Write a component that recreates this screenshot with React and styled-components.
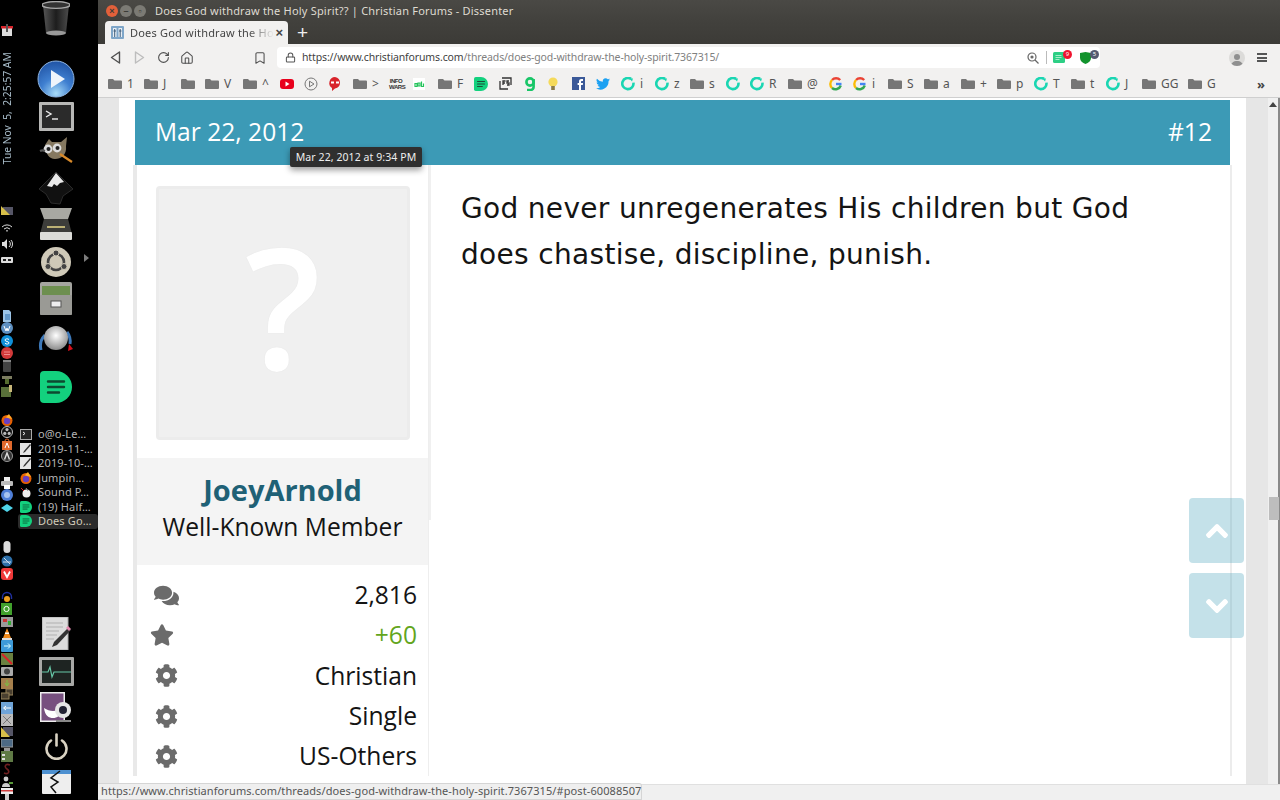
import React from "react"
import styled, { createGlobalStyle } from "styled-components"
import { FaComments, FaStar, FaCog, FaChevronUp, FaChevronDown } from "react-icons/fa"
import { RotateCw, Home, Bookmark, Lock } from "lucide-react"

const GlobalStyle = createGlobalStyle`
  html, body {
    margin: 0;
    height: 100%;
    overflow: hidden;
    background: #000;
  }
  * { box-sizing: border-box; }
`

const Desktop = styled.div`
  display: flex;
  width: 1280px;
  height: 800px;
  overflow: hidden;
`

/* ---------- launcher ---------- */

const Launcher = styled.aside`
  position: relative;
  display: flex;
  width: 98px;
  flex: none;
  height: 800px;
  background: #000;
  overflow: hidden;
`

const Tray = styled.div`
  display: flex;
  flex-direction: column;
  align-items: center;
  width: 14px;
  flex: none;
`

const TrayGroup = styled.div`
  display: flex;
  flex-direction: column;
  align-items: center;
  margin-top: ${(p) => p.$top}px;
`

const TrayItem = styled.div`
  display: flex;
  align-items: center;
  justify-content: center;
  height: ${(p) => p.$h}px;
`

const Clock = styled.div`
  margin-top: 10px;
  height: 119px;
  writing-mode: vertical-rl;
  transform: rotate(180deg);
  font: 10.3px/14px "Noto Sans", sans-serif;
  white-space: pre;
  color: #a8bcc9;
`

const Dock = styled.div`
  display: flex;
  flex-direction: column;
  align-items: center;
  flex: 1;
`

const DockSlot = styled.div`
  position: relative;
  display: flex;
  justify-content: center;
  margin-top: ${(p) => p.$top}px;
  height: ${(p) => p.$h}px;
`

const DockArrow = styled.span`
  position: absolute;
  left: 43px;
  top: 7px;
  width: 0;
  height: 0;
  border-left: 5px solid #7c7c7c;
  border-top: 4px solid transparent;
  border-bottom: 4px solid transparent;
`

const WindowList = styled.div`
  align-self: stretch;
  margin-top: 24px;
  padding-left: 4px;
`

const WindowRow = styled.div`
  display: flex;
  align-items: center;
  gap: 6px;
  height: 14.5px;
  padding-left: 2px;
  border-radius: 3px;
  background: ${(p) => (p.$active ? "#2b2b2b" : "transparent")};
  color: ${(p) => (p.$active ? "#d3cdbb" : "#b5b5b5")};
  font: 11px/14px "Noto Sans", sans-serif;
  letter-spacing: 0.15px;
  white-space: nowrap;
`

/* ---------- browser chrome ---------- */

const Browser = styled.main`
  position: relative;
  display: flex;
  flex-direction: column;
  flex: 1;
  min-width: 0;
  height: 800px;
  background: #f2f1f0;
`

const TitleBar = styled.div`
  display: flex;
  align-items: center;
  height: 21px;
  padding-left: 8px;
  background: linear-gradient(#4a4945, #42413d);
`

const WindowDot = styled.span`
  width: 12px;
  height: 12px;
  margin-right: 2px;
  border-radius: 50%;
  display: flex;
  align-items: center;
  justify-content: center;
  background: ${(p) => (p.$close ? "#e2603a" : "#7b7a74")};
  color: #3c3b37;
  font: bold 9px/12px "Liberation Sans", sans-serif;
`

const WindowTitle = styled.div`
  margin-left: 7px;
  font: 11px/21px "Noto Sans", sans-serif;
  letter-spacing: 0.2px;
  color: #dfdbd2;
`

const TabStrip = styled.div`
  display: flex;
  align-items: flex-end;
  height: 23px;
  padding-left: 7px;
  background: linear-gradient(#42413d, #3c3b37);
`

const Tab = styled.div`
  display: flex;
  align-items: center;
  width: 183px;
  height: 23px;
  padding-left: 6px;
  background: #f2f1f0;
  border-radius: 4px 4px 0 0;
`

const TabText = styled.span`
  flex: none;
  margin-left: 6px;
  white-space: nowrap;
  font: 11px/23px "Noto Sans", sans-serif;
  letter-spacing: 0.2px;
  color: #444;
  mask-image: linear-gradient(90deg, #000 82%, transparent);
`

const TabClose = styled.span`
  margin-left: auto;
  margin-right: 5px;
  font: bold 13px/23px "Liberation Sans", sans-serif;
  color: #444;
`

const NewTab = styled.span`
  margin-left: 9px;
  font: 19px/23px "Liberation Sans", sans-serif;
  color: #eee;
`

const Toolbar = styled.div`
  display: flex;
  align-items: center;
  height: 25px;
  margin-top: 1px;
  padding-left: 5px;
  color: #555;
`

const NavButton = styled.span`
  display: flex;
  justify-content: center;
  width: 24px;
  color: ${(p) => (p.$off ? "#bdbdbd" : "#505050")};
`

const SaveButton = styled(NavButton)`
  margin-left: 49px;
`

const Address = styled.div`
  position: relative;
  display: flex;
  align-items: center;
  width: 823px;
  height: 21px;
  margin-left: 5px;
  padding-left: 8px;
  background: #fff;
  border-radius: 4px;
`

const Url = styled.div`
  margin-left: 6px;
  font: 10.5px/21px "Noto Sans", sans-serif;
  letter-spacing: -0.13px;
  color: #3f3f3f;
  span { color: #808080; }
`

const AddressTools = styled.div`
  display: flex;
  align-items: center;
  margin-left: auto;
`

const Divider = styled.span`
  width: 1px;
  height: 13px;
  margin: 0 6px 0 7px;
  background: #bbb;
`

const Extension = styled.span`
  position: relative;
  display: flex;
  width: ${(p) => p.$w}px;
`

const Badge = styled.span`
  position: absolute;
  top: -2px;
  left: 10px;
  width: 9px;
  height: 9px;
  border-radius: 50%;
  background: ${(p) => p.$bg};
  color: #fff;
  font: 6px/9px "Noto Sans", sans-serif;
  text-align: center;
`

const Avatar = styled.span`
  display: flex;
  justify-content: center;
  align-items: flex-end;
  width: 16px;
  height: 16px;
  margin-left: 129px;
  overflow: hidden;
  border-radius: 50%;
  background: #dcdbd9;
`

const MenuLines = styled.span`
  width: 10px;
  height: 9px;
  margin-left: 12px;
  border-top: 2px solid #555;
  border-bottom: 2px solid #555;
  position: relative;
  &::after {
    content: "";
    position: absolute;
    left: 0;
    right: 0;
    top: 1.5px;
    height: 2px;
    background: #555;
  }
`

const BookmarkBar = styled.div`
  display: flex;
  align-items: center;
  height: 28px;
  padding-left: 10px;
  border-bottom: 1px solid #cfcfcf;
`

const BookmarkItem = styled.div`
  display: flex;
  align-items: center;
  gap: 5px;
  flex: none;
  width: ${(p) => p.$w}px;
  font: 12px/14px "Noto Sans", sans-serif;
  color: #555;
`

const InfoMark = styled.span`
  width: 14px;
  font: 900 6px/6px "Liberation Sans", sans-serif;
  letter-spacing: -0.4px;
  color: #333;
  text-align: center;
`

const Overflow = styled.span`
  margin-left: 6px;
  font: bold 13px/14px "Noto Sans", sans-serif;
  color: #444;
`

/* ---------- page ---------- */

const Viewport = styled.div`
  position: relative;
  display: flex;
  flex: 1;
  min-height: 0;
  overflow: hidden;
`

const Gutter = styled.div`
  width: ${(p) => p.$w}px;
  flex: none;
  background: #e6e6e6;
`

const Sheet = styled.div`
  flex: 1;
  min-width: 0;
  background: #fff;
  padding: 2px 14px 0;
`

const PostHeader = styled.header`
  display: flex;
  justify-content: space-between;
  align-items: center;
  height: 65px;
  margin: 0 2px 0 2px;
  padding: 0 18px 1px 20px;
  background: #3c9ab6;
  color: #fff;
  font: 24.6px/34px "Open Sans", sans-serif;
`

const PostBody = styled.div`
  display: flex;
  border-right: 2px solid #ececec;
`

const UserCell = styled.div`
  position: relative;
  width: 296px;
  flex: none;
  border-left: 4px solid #e9e9e9;
  border-right: 1px solid #eee;
  &::after {
    content: "";
    position: absolute;
    top: 0;
    right: -3px;
    width: 2px;
    height: 355px;
    background: #f0f0f0;
  }
`

const AvatarBlock = styled.div`
  padding: 21px 19px 18px;
`

const BlankAvatar = styled.div`
  display: flex;
  align-items: center;
  justify-content: center;
  width: 254px;
  height: 254px;
  padding-bottom: 17px;
  border: 3px solid #ececec;
  border-radius: 4px;
  background: #f0f0f0;
  color: #fff;
  font: 600 168px/1 "Open Sans", sans-serif;
  text-shadow: 0 0 1px #ddd;
`

const NameBlock = styled.div`
  height: 107px;
  padding-top: 12px;
  background: #f4f4f4;
  text-align: center;
`

const UserName = styled.div`
  font: 700 29px/40px "Open Sans", sans-serif;
  color: #1f6176;
`

const UserTitle = styled.div`
  font: 24.6px/34px "Open Sans", sans-serif;
  color: #141414;
`

const Stats = styled.dl`
  margin: 0;
  padding: 10px 11px 0 16px;
`

const StatRow = styled.div`
  display: flex;
  align-items: center;
  justify-content: space-between;
  height: 40.3px;
`

const StatIcon = styled.dt`
  display: flex;
  justify-content: center;
  width: 26px;
  margin-left: ${(p) => p.$shift}px;
  color: #6b6b6b;
  font-size: ${(p) => p.$size}px;
`

const StatValue = styled.dd`
  margin: 0;
  font: 24.6px/34px "Open Sans", sans-serif;
  color: ${(p) => (p.$good ? "#63a51c" : "#141414")};
`

const Message = styled.article`
  flex: 1;
  padding: 21px 70px 0 32px;
  font: 28px/46px "DejaVu Sans", sans-serif;
  letter-spacing: 0.32px;
  color: #141414;
`

const DateTip = styled.div`
  position: absolute;
  left: 192px;
  top: 49px;
  width: 132px;
  height: 20px;
  border-radius: 2px;
  background: #2f2f2f;
  box-shadow: 0 3px 6px rgba(0, 0, 0, 0.4);
  color: #eee;
  font: 10.5px/20px "Noto Sans", sans-serif;
  letter-spacing: 0.08px;
  text-align: center;
`

const ScrollButtons = styled.div`
  position: absolute;
  left: 1091px;
  top: 400px;
  display: flex;
  flex-direction: column;
  gap: 10px;
`

const ScrollButton = styled.div`
  display: flex;
  align-items: center;
  justify-content: center;
  width: 55px;
  height: 65px;
  border-radius: 4px;
  background: rgba(60, 154, 182, 0.3);
  color: #fff;
  font-size: 24px;
  svg { stroke: #fff; stroke-width: 30; }
`

const ScrollTrack = styled.div`
  position: relative;
  width: 12px;
  flex: none;
  background: #f0f0f0;
  border-right: 2px solid #8a8a8a;
`

const TrackArrow = styled.span`
  position: absolute;
  left: 1px;
  top: 4px;
  border-left: 4px solid transparent;
  border-right: 4px solid transparent;
  border-bottom: 5px solid #444;
`

const TrackThumb = styled.span`
  position: absolute;
  left: 1px;
  top: 399px;
  width: 10px;
  height: 23px;
  background: #bdbdbd;
`

const BottomBar = styled.div`
  position: absolute;
  left: 0;
  right: 0;
  bottom: 0;
  height: 16px;
  background: #f0f0f0;
  border-top: 1px solid #e0e0e0;
`

const StatusBubble = styled.div`
  position: absolute;
  left: 0;
  bottom: 0;
  width: 544px;
  height: 17px;
  padding-left: 3px;
  background: #efefef;
  border: 1px solid #d5d5d5;
  border-left: 0;
  border-radius: 0 3px 0 0;
  font: 11px/14px "Noto Sans", sans-serif;
  letter-spacing: 0.09px;
  color: #555;
  white-space: nowrap;
`

/* ---------- drawings ---------- */

const Folder = () => (
  <svg width="14" height="12" viewBox="0 0 14 12">
    <path d="M0 2a1 1 0 0 1 1-1h4l1.5 1.5H13a1 1 0 0 1 1 1V10a1 1 0 0 1-1 1H1a1 1 0 0 1-1-1z" fill="#767676" />
  </svg>
)

const Ring = () => (
  <svg width="14" height="14" viewBox="0 0 14 14">
    <path d="M10 1.9A5.6 5.6 0 1 0 12.4 5.6" fill="none" stroke="#1ad6b2" strokeWidth="2.6" />
    <path d="M8 1.2l4 .2-1 3z" fill="#1ad6b2" />
  </svg>
)

const NoteMark = ({ size = 14, fill = "#13d17e", line = "#1c4d37" }) => (
  <svg width={size} height={size} viewBox="0 0 32 32">
    <path d="M4 0h12a16 16 0 0 1 0 32H4a4 4 0 0 1-4-4V4a4 4 0 0 1 4-4z" fill={fill} />
    <path d="M8 10.5h16M8 16h16M8 21.5h11" stroke={line} strokeWidth="2.4" strokeLinecap="round" />
  </svg>
)

const GoogleG = () => (
  <svg width="14" height="14" viewBox="0 0 14 14" fill="none" strokeWidth="2.4">
    <path d="M11.2 3A5.6 5.6 0 0 0 3 3" stroke="#ea4335" />
    <path d="M3 3a5.6 5.6 0 0 0 0 8" stroke="#fbbc05" />
    <path d="M3 11a5.6 5.6 0 0 0 8.8-2.5" stroke="#34a853" />
    <path d="M12.5 7H7" stroke="#4285f4" />
  </svg>
)

const bookmarkIcons = {
  folder: <Folder />,
  ring: <Ring />,
  google: <GoogleG />,
  note: <NoteMark />,
  youtube: (
    <svg width="14" height="10" viewBox="0 0 14 10">
      <rect width="14" height="10" rx="3" fill="#e8001c" />
      <path d="M5.5 2.5v5l4-2.5z" fill="#fff" />
    </svg>
  ),
  play: (
    <svg width="14" height="14" viewBox="0 0 14 14" fill="none" stroke="#777">
      <circle cx="7" cy="7" r="6" />
      <path d="M5.5 4.2v5.6L10 7z" />
    </svg>
  ),
  chat: (
    <svg width="14" height="14" viewBox="0 0 14 14">
      <path d="M7 0a7 6 0 0 1 0 11.5L4 14v-3A6 6 0 0 1 7 0z" fill="#d8232a" />
      <rect x="3" y="4.5" width="3" height="2" fill="#fff" />
      <rect x="8" y="4.5" width="3" height="2" fill="#fff" />
    </svg>
  ),
  infowars: <InfoMark>INFO WARS</InfoMark>,
  gab: (
    <svg width="12" height="12" viewBox="0 0 12 12">
      <rect width="12" height="12" fill="#fff" />
      <path d="M2 5.5h2v3H2zM5 5h2v3H5zM8.5 3.5v5h2v-3" fill="none" stroke="#25c35b" strokeWidth="1.2" />
    </svg>
  ),
  fs: (
    <svg width="13" height="13" viewBox="0 0 13 13" fill="none" stroke="#333" strokeWidth="1.3">
      <path d="M3 1h9v7M1 4v8h8" />
      <path d="M4 8V4h2.5M4 6h2M10 4H8v2h2v2H8" />
    </svg>
  ),
  grammarly: (
    <svg width="12" height="14" viewBox="0 0 12 14" fill="none" stroke="#19c668" strokeWidth="2.6">
      <circle cx="6" cy="5" r="3.6" />
      <path d="M9.6 2v8a3 3 0 0 1-3 3H3" />
    </svg>
  ),
  bulb: (
    <svg width="10" height="14" viewBox="0 0 10 14">
      <circle cx="5" cy="5" r="4.6" fill="#f5da5a" />
      <rect x="3.2" y="9" width="3.6" height="4" fill="#8a7a4a" />
    </svg>
  ),
  facebook: (
    <svg width="13" height="13" viewBox="0 0 13 13">
      <rect width="13" height="13" fill="#3b5998" />
      <path d="M9 13V8h1.8l.2-2H9V5c0-.7.3-1 1-1h1V2H9.4C7.6 2 7 3 7 4.6V6H5.6v2H7v5z" fill="#fff" />
    </svg>
  ),
  twitter: (
    <svg width="14" height="12" viewBox="0 0 24 20">
      <path d="M24 2.4a10 10 0 0 1-2.8.8A5 5 0 0 0 23.3.5a10 10 0 0 1-3.1 1.2 4.9 4.9 0 0 0-8.4 4.5A14 14 0 0 1 1.7.9a4.9 4.9 0 0 0 1.5 6.6 5 5 0 0 1-2.2-.6 4.9 4.9 0 0 0 3.9 4.9 5 5 0 0 1-2.2.1 4.9 4.9 0 0 0 4.6 3.4A9.9 9.9 0 0 1 0 17.3 14 14 0 0 0 21.5 5a10 10 0 0 0 2.5-2.6z" fill="#1da1f2" />
    </svg>
  ),
}

const bookmarks = [
  ["folder", "1", 36], ["folder", "J", 37], ["folder", "", 24], ["folder", "V", 38], ["folder", "^", 37],
  ["youtube", "", 24], ["play", "", 24], ["chat", "", 25], ["folder", ">", 36], ["infowars", "", 24],
  ["gab", "", 25], ["folder", "F", 36], ["note", "", 25], ["fs", "", 25], ["grammarly", "", 24],
  ["bulb", "", 24], ["facebook", "", 24], ["twitter", "", 25], ["ring", "i", 34], ["ring", "z", 35],
  ["folder", "s", 36], ["ring", "", 24], ["ring", "R", 38], ["folder", "@", 41], ["google", "", 24],
  ["google", "i", 35], ["folder", "S", 36], ["folder", "a", 37], ["folder", "+", 36], ["folder", "p", 37],
  ["ring", "T", 37], ["folder", "t", 35], ["ring", "J", 36], ["folder", "GG", 46], ["folder", "G", 63],
]

const Mini = ({ children, w = 12, h = 12 }) => (
  <svg width={w} height={h} viewBox="0 0 12 12">
    {children}
  </svg>
)

const trayIcons = {
  net: <Mini><rect x="1" y="4" width="10" height="8" fill="#ddd" /><rect x="0" y="2" width="12" height="2.5" fill="#d8232a" /><rect x="5" y="0" width="2" height="8" fill="#555" /></Mini>,
  ruler: <Mini><rect x="2" y="1" width="10" height="8" fill="#556" /><path d="M0 0l9 9H0z" fill="#d8c04a" /></Mini>,
  wifi: <Mini><path d="M1 5a7 7 0 0 1 10 0M3 7a4.5 4.5 0 0 1 6 0M5 9a2 2 0 0 1 2 0" fill="none" stroke="#ddd" /></Mini>,
  volume: <Mini><path d="M1 4h2l3-3v10L3 8H1z" fill="#ddd" /><path d="M8 3a4 4 0 0 1 0 6M10 2a6 6 0 0 1 0 8" fill="none" stroke="#ddd" /></Mini>,
  battery: <Mini><rect x="0" y="3" width="12" height="6" rx="1" fill="#ddd" /><rect x="2" y="5" width="3" height="2" fill="#222" /><rect x="7" y="5" width="3" height="2" fill="#222" /></Mini>,
  doc: <Mini><path d="M2 0h6l2 2v10H2z" fill="#9cc4e6" /><path d="M4 5h5M4 7h5M4 9h5" stroke="#2a6aa8" /></Mini>,
  wp: <Mini><circle cx="6" cy="6" r="6" fill="#5d8fc0" /><path d="M3 4l2 5 1-3 1 3 2-5" fill="none" stroke="#fff" /></Mini>,
  skype: <Mini><circle cx="6" cy="6" r="6" fill="#0f8fd8" /><path d="M8 4.5C7 3.5 4 3.6 4 5c0 2 4 1 4 3 0 1.3-3 1.4-4 .3" fill="none" stroke="#fff" /></Mini>,
  red: <Mini><circle cx="6" cy="6" r="6" fill="#d23a3a" /><path d="M3 5h6M3 7.5h6" stroke="#f08a8a" /></Mini>,
  bin: <Mini><rect x="2" y="0" width="8" height="12" rx="1" fill="#444" /><rect x="2" y="0" width="8" height="2" fill="#888" /></Mini>,
  tool: <Mini><rect x="1" y="3" width="10" height="3" fill="#7c7c60" /><rect x="4" y="6" width="4" height="5" fill="#556b2f" /></Mini>,
  greenbox: <Mini><rect x="0" y="2" width="10" height="10" fill="#59703a" /><rect x="8" y="0" width="3" height="7" fill="#c9b87a" /></Mini>,
  firefox: <Mini><circle cx="6" cy="6.5" r="5.5" fill="#e66000" /><circle cx="6" cy="7" r="3.2" fill="#6a3fc0" /><path d="M1 2l4 1 3-3 3 5-4-1z" fill="#ffb02e" /></Mini>,
  obs: <Mini><circle cx="6" cy="6" r="5.5" fill="#111" stroke="#bbb" /><circle cx="6" cy="3.6" r="1.6" fill="#bbb" /><circle cx="3.8" cy="7.4" r="1.6" fill="#bbb" /><circle cx="8.2" cy="7.4" r="1.6" fill="#bbb" /></Mini>,
  store: <Mini><path d="M1 3h10v9H1z" fill="#e0692c" /><path d="M4 3a2 2 0 0 1 4 0" fill="none" stroke="#e0692c" /><path d="M4 10l2-5 2 5" fill="none" stroke="#fff" /></Mini>,
  updates: <Mini><circle cx="6" cy="6" r="5.5" fill="#333" stroke="#999" /><path d="M3.5 9.5L6 3l2.5 6.5" fill="none" stroke="#ddd" strokeWidth="1.4" /></Mini>,
  printer: <Mini><rect x="3" y="0" width="6" height="4" fill="#eee" /><rect x="0" y="4" width="12" height="5" rx="1" fill="#bbb" /><rect x="3" y="8" width="6" height="4" fill="#fff" /></Mini>,
  chrome: <Mini><circle cx="6" cy="6" r="6" fill="#4f7fd8" /><circle cx="6" cy="6" r="3" fill="#a8c4f0" /></Mini>,
  diamond: <Mini><path d="M6 2l6 4-6 4-6-4z" fill="#4fd4ea" /></Mini>,
  mouse: <Mini><rect x="2.5" y="0" width="7" height="12" rx="3.5" fill="#ddd" /></Mini>,
  globe: <Mini><circle cx="6" cy="6" r="5.5" fill="#2d6fa8" /><path d="M3 3l6 6M2 7h8" stroke="#cde" /></Mini>,
  vivaldi: <Mini><rect width="12" height="12" rx="3" fill="#ef3939" /><path d="M3 3.5L6 9l3-5.5" fill="none" stroke="#fff" strokeWidth="1.8" /></Mini>,
  phones: <Mini><path d="M1.5 8V6a4.5 4.5 0 0 1 9 0v2" fill="none" stroke="#2030a0" strokeWidth="1.4" /><circle cx="6" cy="8" r="3" fill="#f0a020" /></Mini>,
  qt: <Mini><rect width="11" height="12" fill="#41a02c" /><circle cx="5.5" cy="6" r="2.6" fill="none" stroke="#fff" /></Mini>,
  gray: <Mini><rect y="1" width="12" height="10" fill="#999" /><rect x="2" y="3" width="4" height="3" fill="#c33" /><rect x="7" y="5" width="3" height="4" fill="#3a3" /></Mini>,
  vlc: <Mini><path d="M6 0l4 10H2z" fill="#f08a1c" /><rect x="1" y="10" width="10" height="2" fill="#ddd" /><rect x="4" y="4.5" width="4" height="1.5" fill="#fff" /></Mini>,
  share: <Mini><rect width="12" height="12" rx="1" fill="#3d9ad8" /><path d="M3 6h6M7 3.5L9.5 6 7 8.5" fill="none" stroke="#dff" /></Mini>,
  slash: <Mini><rect width="12" height="12" fill="#6a8040" /><path d="M1 1l10 10" stroke="#d8232a" strokeWidth="2" /></Mini>,
  camera: <Mini><rect y="2" width="12" height="9" rx="1" fill="#aaa" /><circle cx="6" cy="6.5" r="3" fill="#444" /></Mini>,
  box: <Mini><rect y="1" width="12" height="11" fill="#a57f4c" /><path d="M6 3v5M4 6l2 3 2-3" stroke="#7bc043" fill="none" /></Mini>,
  screens: <Mini><rect x="5" y="0" width="7" height="6" fill="#4a4030" stroke="#97835a" /><rect x="0" y="4" width="8" height="6" fill="#4a4030" stroke="#97835a" /></Mini>,
  back: <Mini><rect width="12" height="12" fill="#6fa4d8" /><path d="M10 6H3M5 4L2.5 6 5 8" fill="none" stroke="#fff" /></Mini>,
  scan: <Mini><rect width="12" height="12" fill="#bbb" /><path d="M2 2l8 8M2 10l8-8" stroke="#777" /></Mini>,
  triangle: <Mini><rect x="2" y="1" width="10" height="9" fill="#556" /><path d="M0 1l9 10H0z" fill="#d8c04a" /></Mini>,
  display: <Mini><rect y="0" width="12" height="8" fill="#4d6a85" stroke="#999" /><rect x="3" y="9" width="6" height="3" fill="#999" /></Mini>,
  panel: <Mini><rect width="12" height="11" fill="#5f7a45" /><rect x="1" y="3" width="3" height="2" fill="#ddd" /><rect x="1" y="7" width="3" height="2" fill="#ddd" /></Mini>,
  script: <Mini><path d="M9 2C4 0 3 4 6 6s2 6-3 4" fill="none" stroke="#6e1f1f" strokeWidth="1.6" /></Mini>,
  person: <Mini><circle cx="5" cy="3" r="2.4" fill="#ccc" /><path d="M1 11a4 4 0 0 1 8 0z" fill="#ccc" /><path d="M8 7h4" stroke="#5a9a3a" strokeWidth="2" /></Mini>,
  usb: <Mini><rect y="0" width="12" height="6" fill="#eee" /><rect y="2" width="12" height="1.5" fill="#d04040" /><rect x="4" y="6" width="4" height="6" fill="#ccc" /></Mini>,
}

const trayGroups = [
  { top: 24, step: 12, items: ["net"] },
  { clock: true },
  { top: 40, step: 16, items: ["ruler", "wifi", "volume", "battery"] },
  { top: 41, step: 12.6, items: ["doc", "wp", "skype", "red", "bin", "tool", "greenbox"] },
  { top: 17, step: 12, items: ["firefox", "obs", "store", "updates"] },
  { top: 14, step: 12.5, items: ["printer", "chrome", "diamond"] },
  { top: 26.5, step: 13.5, items: ["mouse", "globe", "vivaldi"] },
  { top: 10, step: 12.3, items: ["phones", "qt", "gray", "vlc", "share", "slash", "camera", "box", "screens", "back", "scan", "triangle", "display", "panel", "script", "person", "usb"] },
]

const Bin = () => (
  <svg width="28" height="35" viewBox="0 0 28 35">
    <defs>
      <linearGradient id="binBody" x1="0" x2="1">
        <stop offset="0" stopColor="#555" />
        <stop offset="0.5" stopColor="#1d1d1d" />
        <stop offset="1" stopColor="#4c4c4c" />
      </linearGradient>
    </defs>
    <path d="M1 4l3 28h20l3-28z" fill="url(#binBody)" />
    <ellipse cx="14" cy="4" rx="14" ry="3.4" fill="#333" stroke="#a8a8a8" strokeWidth="1.4" />
    <ellipse cx="14" cy="32" rx="10" ry="2.4" fill="#999" />
  </svg>
)

const Player = () => (
  <svg width="38" height="38" viewBox="0 0 38 38">
    <defs>
      <radialGradient id="playBall" cx="0.5" cy="0.9" r="0.95">
        <stop offset="0" stopColor="#a8dcf8" />
        <stop offset="0.45" stopColor="#3f7fd0" />
        <stop offset="1" stopColor="#1d4fa0" />
      </radialGradient>
    </defs>
    <circle cx="19" cy="19" r="18" fill="url(#playBall)" stroke="#8eb4e0" />
    <path d="M14 10l14 9-14 9z" fill="#eef4fb" />
  </svg>
)

const Terminal = () => (
  <svg width="35" height="29" viewBox="0 0 35 29">
    <rect width="35" height="29" rx="1" fill="#b8b8b6" />
    <rect x="3" y="3" width="29" height="23" fill="#2b2b2b" />
    <path d="M7 9l5 3-5 3" fill="none" stroke="#eee" strokeWidth="1.4" />
    <path d="M13 17h6" stroke="#eee" strokeWidth="1.4" />
  </svg>
)

const Gimp = () => (
  <svg width="34" height="27" viewBox="0 0 34 27">
    <path d="M6 8L10 2l3 3h9l6-5-1 9c1 9-5 13-11 13S7 17 6 8z" fill="#857860" />
    <circle cx="9" cy="12" r="4.4" fill="#ddd" />
    <circle cx="18" cy="11" r="4.4" fill="#ddd" />
    <circle cx="9.5" cy="12" r="2" fill="#222" />
    <circle cx="18.5" cy="11" r="2" fill="#222" />
    <path d="M1 14c2-1 3-1 5 0" stroke="#555" strokeWidth="2" fill="none" />
    <path d="M21 17l12 8" stroke="#d88a2a" strokeWidth="2.2" />
  </svg>
)

const Inkscape = () => (
  <svg width="34" height="33" viewBox="0 0 34 33">
    <path d="M17 0l17 17-10 7-3 8-9-1-5-9-7-5z" fill="#111" stroke="#2b2b2b" />
    <path d="M17 1l8 9-4 1-3 3-3-2-2 3-5-1z" fill="#e9e9e9" />
  </svg>
)

const Scanner = () => (
  <svg width="32" height="32" viewBox="0 0 32 32">
    <path d="M0 0h32l-4 11H4z" fill="#a8a8a2" />
    <path d="M4 11h24l4 15H0z" fill="#3d3d3a" />
    <path d="M7 19h18" stroke="#e7d88a" strokeWidth="1.5" />
    <rect y="24" width="32" height="8" rx="1" fill="#dcdcd8" />
  </svg>
)

const Ubuntu = () => (
  <svg width="30" height="30" viewBox="0 0 30 30">
    <circle cx="15" cy="15" r="15" fill="#cfc9b8" />
    <circle cx="15" cy="15" r="8" fill="none" stroke="#444" strokeWidth="2.6" />
    <circle cx="15" cy="6" r="3" fill="#444" stroke="#cfc9b8" />
    <circle cx="7" cy="19.5" r="3" fill="#444" stroke="#cfc9b8" />
    <circle cx="23" cy="19.5" r="3" fill="#444" stroke="#cfc9b8" />
  </svg>
)

const Files = () => (
  <svg width="32" height="33" viewBox="0 0 32 33">
    <rect width="32" height="33" rx="2" fill="#a5a5a0" />
    <rect x="2" y="4" width="28" height="9" fill="#6d8f4f" />
    <rect y="13" width="32" height="20" rx="1" fill="#9a9a95" />
    <rect x="11" y="19" width="10" height="6" fill="#eee" stroke="#555" />
  </svg>
)

const Knob = () => (
  <svg width="36" height="26" viewBox="0 0 36 26">
    <defs>
      <radialGradient id="knobFace" cx="0.5" cy="0.4" r="0.6">
        <stop offset="0" stopColor="#fff" />
        <stop offset="1" stopColor="#8c8c8c" />
      </radialGradient>
    </defs>
    <path d="M3 24a16 16 0 0 1 4-15" stroke="#3d78b8" strokeWidth="3" fill="none" />
    <path d="M29 6a16 16 0 0 1 3 12" stroke="#3d78b8" strokeWidth="3" fill="none" />
    <path d="M31 18l4 5-5 2z" fill="#d8101c" />
    <circle cx="18" cy="12" r="12" fill="url(#knobFace)" />
  </svg>
)

const Editor = () => (
  <svg width="29" height="33" viewBox="0 0 29 33">
    <rect width="26" height="33" fill="#dcdcdc" stroke="#aaa" />
    <path d="M4 6h17M4 10h17M4 14h13M4 18h11M4 22h8" stroke="#b0b0b0" />
    <path d="M27 10l2 3-14 15-5 2 2-5z" fill="#333" />
    <path d="M26 9l3 3-2 2-3-3z" fill="#e58ab0" />
  </svg>
)

const Monitor = () => (
  <svg width="35" height="29" viewBox="0 0 35 29">
    <rect width="35" height="29" rx="1" fill="#a8a8a6" />
    <rect x="3" y="3" width="29" height="23" fill="#1e2422" />
    <path d="M3 15h6l2-5 2 10 2-5h17" fill="none" stroke="#67c8a8" strokeWidth="1.2" />
  </svg>
)

const Webcam = () => (
  <svg width="33" height="30" viewBox="0 0 33 30">
    <rect width="25" height="30" fill="#eee" />
    <rect x="1.5" y="1.5" width="22" height="27" fill="#77507f" />
    <path d="M4 16c6 4 12 4 18 0-1 8-5 10-9 10s-8-2-9-10z" fill="#fff" />
    <circle cx="23" cy="18" r="8" fill="#e5e5e5" />
    <circle cx="23" cy="18" r="4" fill="#223" />
    <path d="M16 29h15" stroke="#888" strokeWidth="2" />
  </svg>
)

const Power = () => (
  <svg width="23" height="27" viewBox="0 0 23 27" fill="none" stroke="#d9d2c2" strokeWidth="2.6" strokeLinecap="round">
    <path d="M6 7.5a10 10 0 1 0 11 0" />
    <path d="M11.5 1.5v11" />
  </svg>
)

const Disk = () => (
  <svg width="29" height="24" viewBox="0 0 29 24">
    <rect width="29" height="24" rx="1" fill="#eee" />
    <rect width="29" height="4" fill="#4d90d0" />
    <path d="M18 1L9 8l7 4-7 5 5 6" fill="none" stroke="#111" strokeWidth="1.5" />
  </svg>
)

const WinTerminal = () => (
  <svg width="12" height="11" viewBox="0 0 12 11">
    <rect width="12" height="11" fill="#aaa" />
    <rect x="1" y="1" width="10" height="9" fill="#222" />
    <path d="M3 3l2 1.5L3 6" stroke="#eee" fill="none" />
  </svg>
)

const WinEdit = () => (
  <svg width="12" height="12" viewBox="0 0 12 12">
    <rect width="11" height="12" fill="#e4e4e4" />
    <path d="M11 2L5 9l-2 1 1-2 6-7z" fill="#333" />
  </svg>
)

const WinSound = () => (
  <svg width="12" height="12" viewBox="0 0 12 12">
    <circle cx="6.5" cy="7.5" r="4" fill="#eee" />
    <path d="M1 2l3 3" stroke="#d8232a" />
    <path d="M6 2l2 3" stroke="#999" />
  </svg>
)

const windows = [
  { icon: <WinTerminal />, label: "o@o-Le…" },
  { icon: <WinEdit />, label: "2019-11-…" },
  { icon: <WinEdit />, label: "2019-10-…" },
  { icon: trayIcons.firefox, label: "Jumpin…" },
  { icon: <WinSound />, label: "Sound P…" },
  { icon: <NoteMark size={12} line="#0b5e38" />, label: "(19) Half…" },
  { icon: <NoteMark size={12} line="#0b5e38" />, label: "Does Go…", active: true },
]

const stats = [
  { Icon: FaComments, shift: 0, size: 25, value: "2,816" },
  { Icon: FaStar, shift: -4, size: 24, value: "+60", good: true },
  { Icon: FaCog, shift: 0, size: 23, value: "Christian" },
  { Icon: FaCog, shift: 0, size: 23, value: "Single" },
  { Icon: FaCog, shift: 0, size: 23, value: "US-Others" },
]

const App = () => {
  return (
    <Desktop>
      <GlobalStyle />
      <Launcher>
        <Tray>
          {trayGroups.map((group, i) =>
            group.clock ? (
              <Clock key={i}>Tue Nov  5,  2:25:57 AM</Clock>
            ) : (
              <TrayGroup key={i} $top={group.top}>
                {group.items.map((name, j) => (
                  <TrayItem key={j} $h={group.step}>
                    {trayIcons[name]}
                  </TrayItem>
                ))}
              </TrayGroup>
            )
          )}
        </Tray>
        <Dock>
          <DockSlot $top={1} $h={35}><Bin /></DockSlot>
          <DockSlot $top={24} $h={38}><Player /></DockSlot>
          <DockSlot $top={4} $h={29}><Terminal /></DockSlot>
          <DockSlot $top={6} $h={27}><Gimp /></DockSlot>
          <DockSlot $top={8} $h={33}><Inkscape /></DockSlot>
          <DockSlot $top={3} $h={32}><Scanner /></DockSlot>
          <DockSlot $top={7} $h={30}><Ubuntu /><DockArrow /></DockSlot>
          <DockSlot $top={5} $h={33}><Files /></DockSlot>
          <DockSlot $top={11} $h={26}><Knob /></DockSlot>
          <DockSlot $top={19} $h={32}><NoteMark size={32} line="#0e4a30" /></DockSlot>
          <WindowList>
            {windows.map((win) => (
              <WindowRow key={win.label} $active={win.active}>
                {win.icon}
                {win.label}
              </WindowRow>
            ))}
          </WindowList>
          <DockSlot $top={88.5} $h={33}><Editor /></DockSlot>
          <DockSlot $top={7} $h={29}><Monitor /></DockSlot>
          <DockSlot $top={6} $h={30}><Webcam /></DockSlot>
          <DockSlot $top={11} $h={27}><Power /></DockSlot>
          <DockSlot $top={10} $h={24}><Disk /></DockSlot>
        </Dock>
      </Launcher>

      <Browser>
        <TitleBar>
          <WindowDot $close>×</WindowDot>
          <WindowDot>–</WindowDot>
          <WindowDot>▫</WindowDot>
          <WindowTitle>Does God withdraw the Holy Spirit?? | Christian Forums - Dissenter</WindowTitle>
        </TitleBar>
        <TabStrip>
          <Tab>
            <svg width="13" height="13" viewBox="0 0 13 13">
              <rect width="13" height="13" rx="1" fill="#7fa6c8" />
              <path d="M2 2h3.5v9H2zM7.5 2H11v9H7.5z" fill="#e8eef4" />
              <path d="M3.7 3v8M2.5 5h2.5M9.2 3v8M8 5h2.5" stroke="#3d5a78" />
            </svg>
            <TabText>Does God withdraw the Ho</TabText>
            <TabClose>×</TabClose>
          </Tab>
          <NewTab>+</NewTab>
        </TabStrip>
        <Toolbar>
          <NavButton>
            <svg width="11" height="13" viewBox="0 0 11 13" fill="none" stroke="currentColor" strokeWidth="1.4">
              <path d="M9.5 1L1.5 6.5l8 5.5z" strokeLinejoin="round" />
            </svg>
          </NavButton>
          <NavButton $off>
            <svg width="11" height="13" viewBox="0 0 11 13" fill="none" stroke="currentColor" strokeWidth="1.4">
              <path d="M1.5 1l8 5.5-8 5.5z" strokeLinejoin="round" />
            </svg>
          </NavButton>
          <NavButton><RotateCw size={13} strokeWidth={2} /></NavButton>
          <NavButton><Home size={14} strokeWidth={1.8} /></NavButton>
          <SaveButton><Bookmark size={14} strokeWidth={1.8} /></SaveButton>
          <Address>
            <Lock size={11} strokeWidth={2.2} />
            <Url>https://www.christianforums.com<span>/threads/does-god-withdraw-the-holy-spirit.7367315/</span></Url>
            <AddressTools>
              <svg width="12" height="12" viewBox="0 0 12 12" fill="none" stroke="#666" strokeWidth="1.2">
                <circle cx="5" cy="5" r="4" />
                <circle cx="5" cy="5" r="1" fill="#666" />
                <path d="M8 8l3.5 3.5" />
              </svg>
              <Divider />
              <Extension $w={27}>
                <svg width="12" height="11" viewBox="0 0 12 11">
                  <rect width="12" height="11" rx="1.5" fill="#2dcf85" />
                  <path d="M2.5 3.5h6M2.5 5.5h6M2.5 7.5h4" stroke="#a8eccb" />
                </svg>
                <Badge $bg="#f0142f">9</Badge>
              </Extension>
              <Extension $w={20}>
                <svg width="11" height="12" viewBox="0 0 11 12">
                  <path d="M0 1l5.5-1L11 1v5c0 3-2.5 5-5.5 6C2.5 11 0 9 0 6z" fill="#12932d" />
                </svg>
                <Badge $bg="#555a70">5</Badge>
              </Extension>
            </AddressTools>
          </Address>
          <Avatar>
            <svg width="12" height="13" viewBox="0 0 12 13" fill="#8f8f8f">
              <circle cx="6" cy="4" r="3" />
              <path d="M0 13c0-3 2.5-5 6-5s6 2 6 5z" />
            </svg>
          </Avatar>
          <MenuLines />
        </Toolbar>
        <BookmarkBar>
          {bookmarks.map(([icon, label, w], i) => (
            <BookmarkItem key={i} $w={w}>
              {bookmarkIcons[icon]}
              {label && <span>{label}</span>}
            </BookmarkItem>
          ))}
          <Overflow>»</Overflow>
        </BookmarkBar>

        <Viewport>
          <Gutter $w={21} />
          <Sheet>
            <PostHeader>
              <span>Mar 22, 2012</span>
              <span>#12</span>
            </PostHeader>
            <PostBody>
              <UserCell>
                <AvatarBlock>
                  <BlankAvatar>?</BlankAvatar>
                </AvatarBlock>
                <NameBlock>
                  <UserName>JoeyArnold</UserName>
                  <UserTitle>Well-Known Member</UserTitle>
                </NameBlock>
                <Stats>
                  {stats.map(({ Icon, shift, size, value, good }) => (
                    <StatRow key={value}>
                      <StatIcon $shift={shift} $size={size}><Icon /></StatIcon>
                      <StatValue $good={good}>{value}</StatValue>
                    </StatRow>
                  ))}
                </Stats>
              </UserCell>
              <Message>God never unregenerates His children but God does chastise, discipline, punish.</Message>
            </PostBody>
          </Sheet>
          <Gutter $w={22} />
          <ScrollTrack>
            <TrackArrow />
            <TrackThumb />
          </ScrollTrack>
          <DateTip>Mar 22, 2012 at 9:34 PM</DateTip>
          <ScrollButtons>
            <ScrollButton><FaChevronUp /></ScrollButton>
            <ScrollButton><FaChevronDown /></ScrollButton>
          </ScrollButtons>
          <BottomBar />
          <StatusBubble>https://www.christianforums.com/threads/does-god-withdraw-the-holy-spirit.7367315/#post-60088507</StatusBubble>
        </Viewport>
      </Browser>
    </Desktop>
  )
}

export default App
